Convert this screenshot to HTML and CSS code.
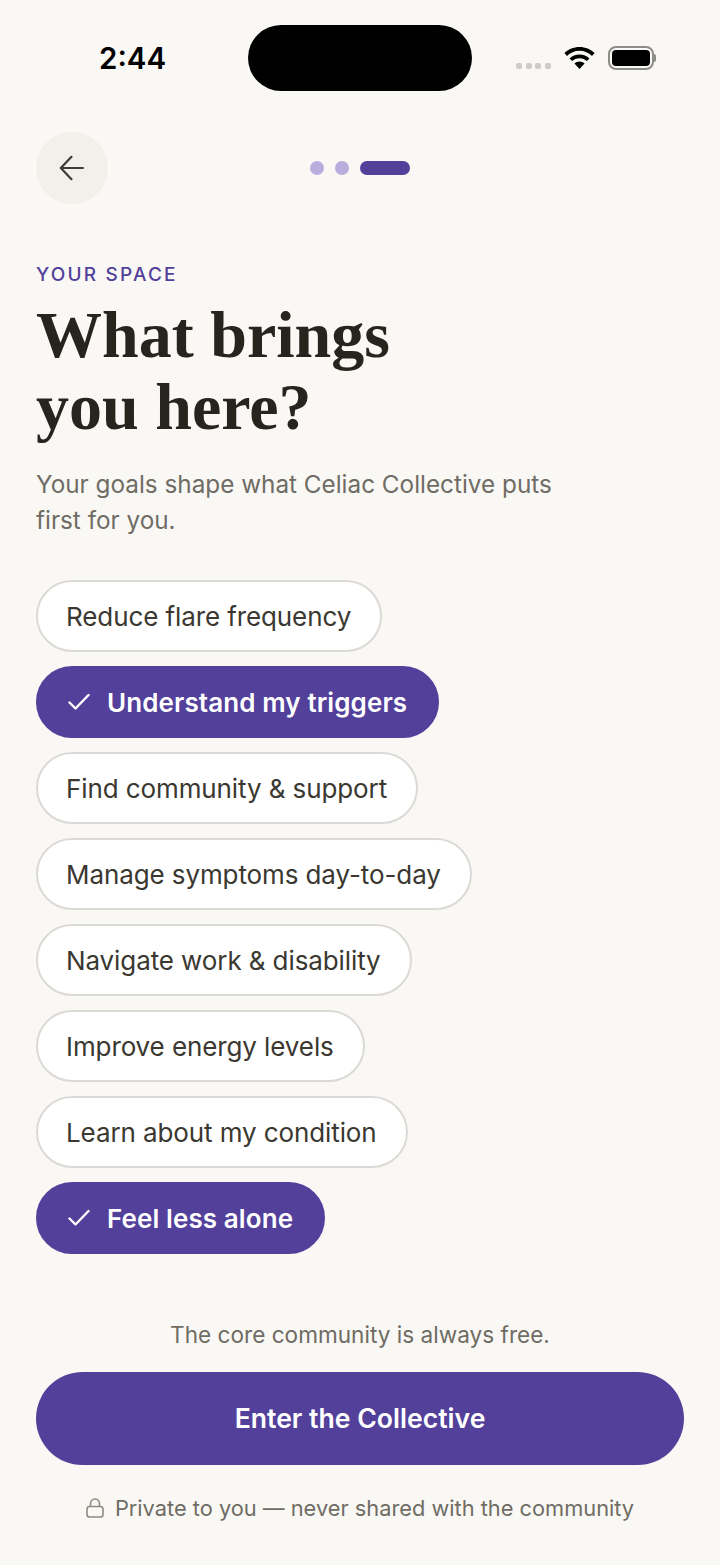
FILE: index.html
```html
<!DOCTYPE html>
<html lang="en">
<head>
<meta charset="utf-8">
<title>What brings you here?</title>
<link rel="stylesheet" href="styles.css">
</head>
<body>
<div class="screen">
  <header class="status">
    <span class="time">2:44</span>
    <div class="island"></div>
    <div class="status-icons">
      <div class="signal"><i></i><i></i><i></i><i></i></div>
      <svg class="wifi" width="31" height="22" viewBox="0 0 31 22">
        <path d="M15.5 0C9.6 0 4.3 2.3 0.4 6.1L3 8.9C6.2 5.8 10.6 3.8 15.5 3.8S24.8 5.8 28 8.9L30.6 6.1C26.7 2.3 21.4 0 15.5 0Z"/>
        <path d="M15.5 7.4C11.6 7.4 8.1 8.9 5.5 11.4L8.1 14.1C10 12.3 12.6 11.2 15.5 11.2S21 12.3 22.9 14.1L25.5 11.4C22.9 8.9 19.4 7.4 15.5 7.4Z"/>
        <path d="M15.5 14.6C13.5 14.6 11.7 15.4 10.4 16.6L15.5 22L20.6 16.6C19.3 15.4 17.5 14.6 15.5 14.6Z"/>
      </svg>
      <div class="battery"><div class="battery-fill"></div></div>
      <div class="battery-cap"></div>
    </div>
  </header>

  <nav class="topbar">
    <button class="back" aria-label="Back">
      <svg width="26" height="26" viewBox="0 0 26 26" fill="none" stroke="#3f3c35" stroke-width="2.2" stroke-linecap="round" stroke-linejoin="round">
        <path d="M24 13H2"/><path d="M12.5 1.8L1.8 13L12.5 24.2"/>
      </svg>
    </button>
    <div class="progress"><i class="dot"></i><i class="dot"></i><i class="bar"></i></div>
  </nav>

  <main class="content">
    <p class="eyebrow">YOUR SPACE</p>
    <h1 class="title">What brings<br>you here?</h1>
    <p class="sub">Your goals shape what Celiac Collective puts first for you.</p>
    <ul class="pills">
      <li class="pill">Reduce flare frequency</li>
      <li class="pill on"><svg class="check" width="22" height="18" viewBox="0 0 22 18" fill="none" stroke="#fff" stroke-width="2.4" stroke-linecap="round" stroke-linejoin="round"><path d="M1.5 9.5L7.5 15.5L20.5 2"/></svg>Understand my triggers</li>
      <li class="pill">Find community &amp; support</li>
      <li class="pill">Manage symptoms day-to-day</li>
      <li class="pill">Navigate work &amp; disability</li>
      <li class="pill">Improve energy levels</li>
      <li class="pill">Learn about my condition</li>
      <li class="pill on"><svg class="check" width="22" height="18" viewBox="0 0 22 18" fill="none" stroke="#fff" stroke-width="2.4" stroke-linecap="round" stroke-linejoin="round"><path d="M1.5 9.5L7.5 15.5L20.5 2"/></svg>Feel less alone</li>
    </ul>
  </main>

  <footer class="foot">
    <p class="free">The core community is always free.</p>
    <button class="cta">Enter the Collective</button>
    <p class="private">
      <svg width="18" height="20" viewBox="0 0 18 20" fill="none" stroke="#8e8b82" stroke-width="1.6"><rect x="1" y="8.5" width="16" height="10.5" rx="2.6"/><path d="M4.5 8.5V5.5a4.5 4.5 0 0 1 9 0V8.5"/></svg>
      Private to you — never shared with the community
    </p>
  </footer>
</div>
</body>
</html>
```
FILE: styles.css
```css
* { box-sizing: border-box; }
html, body { margin: 0; padding: 0; }
body { background: #faf8f5; font-family: "Inter", "Liberation Sans", sans-serif; }
.screen { width: 720px; height: 1565px; display: flex; flex-direction: column; overflow: hidden; }

.status { height: 132px; padding: 25px 0 0 99px; display: flex; align-items: flex-start; }
.time { width: 149px; height: 66px; line-height: 66px; font-family: "Inter", sans-serif; font-size: 29.5px; font-weight: 600; color: #000; }
.island { width: 224px; height: 66px; border-radius: 33px; background: #000; }
.status-icons { display: flex; align-items: center; margin-left: 44px; height: 66px; }
.signal { display: flex; gap: 3.67px; margin-top: 16px; }
.signal i { width: 6px; height: 6px; border-radius: 2px; background: #cdccc8; }
.wifi { margin-left: 13px; fill: #000; }
.battery { width: 46px; height: 24px; margin-left: 13px; border: 2px solid #8f8d88; border-radius: 8px; padding: 2px; }
.battery-fill { width: 100%; height: 100%; background: #000; border-radius: 4px; }
.battery-cap { width: 2px; height: 8px; background: #8f8d88; border-radius: 0 2px 2px 0; }

.topbar { height: 72px; margin: 0 36px; display: flex; align-items: center; }
.back { width: 72px; height: 72px; border: 0; border-radius: 50%; background: #f2f0ea; padding: 0; display: flex; align-items: center; justify-content: center; }
.progress { display: flex; gap: 11px; margin-left: 202px; }
.dot { width: 14px; height: 14px; border-radius: 50%; background: #b8aedd; }
.bar { width: 50px; height: 14px; border-radius: 7px; background: #52409b; }

.content { padding: 59px 36px 0; }
.eyebrow { margin: 0; font-size: 19px; line-height: 24px; font-weight: 500; letter-spacing: 2.2px; color: #52409b; }
.title { margin: 12px 0 0; font-family: "Liberation Serif", serif; font-size: 66px; line-height: 72px; font-weight: 700; color: #26241d; letter-spacing: 0; }
.sub { margin: 23px 0 0; width: 560px; font-size: 24.3px; line-height: 36px; color: #6f6c64; }

.pills { list-style: none; margin: 42px 0 0; padding: 0; display: flex; flex-direction: column; align-items: flex-start; gap: 14px; }
.pill { height: 72px; padding: 0 29px 0 28px; display: flex; align-items: center; background: #fff; border: 2px solid #dcdad6; border-radius: 36px; font-size: 26px; letter-spacing: -0.1px; color: #3a3830; }
.pill.on { padding: 0 30px; background: #52409b; border-color: #52409b; color: #fff; font-weight: 600; letter-spacing: 0.1px; }
.check { margin-right: 17px; }

.foot { margin-top: auto; padding: 0 36px 42px; display: flex; flex-direction: column; align-items: center; }
.free { margin: 0; font-size: 22.6px; line-height: 30px; color: #6f6c64; }
.cta { margin-top: 22px; width: 100%; height: 93px; padding: 0 0 2px; border: 0; border-radius: 47px; background: #52409b; color: #fff; font-family: inherit; font-size: 26.6px; font-weight: 600; }
.private { margin: 28px 0 0; display: flex; align-items: center; gap: 11px; font-size: 21.8px; line-height: 30px; font-weight: 400; color: #6f6c64; }
```
